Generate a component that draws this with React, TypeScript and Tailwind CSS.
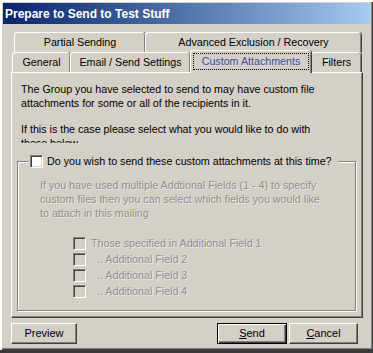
import React from "react";

const face = { fontFamily: '"Liberation Sans", Arial, sans-serif' };

function Tab({
  label,
  width,
  active,
}: {
  label: string;
  width: string;
  active?: boolean;
}): JSX.Element {
  if (active) {
    return (
      <div
        className={`${width} relative z-10 -mb-px flex h-[23px] items-start justify-center rounded-t-[3px] border-l border-t border-white bg-[#d4d0c8] px-[2px] pt-[2px] shadow-[inset_-1px_0_0_#808080,1px_0_0_#404040]`}
      >
        <div className="flex h-[17px] w-full items-center justify-center border border-dotted border-black text-[#3f4fa3]">
          {label}
        </div>
      </div>
    );
  }
  return (
    <div
      className={`${width} flex h-[20px] items-center justify-center rounded-t-[3px] border-l border-t border-white bg-[#d4d0c8] shadow-[inset_-1px_0_0_#808080,1px_0_0_#404040]`}
    >
      {label}
    </div>
  );
}

function Check({ disabled }: { disabled?: boolean }): JSX.Element {
  return (
    <div
      className={`h-[13px] w-[13px] shrink-0 border border-b-white border-l-[#808080] border-r-white border-t-[#808080] shadow-[inset_1px_1px_0_#404040,inset_-1px_-1px_0_#d4d0c8] ${
        disabled ? "bg-[#d4d0c8]" : "bg-white"
      }`}
    />
  );
}

function Button({
  children,
  width,
  primary,
}: {
  children: React.ReactNode;
  width: string;
  primary?: boolean;
}): JSX.Element {
  return (
    <button
      type="button"
      className={`${width} flex h-[21px] items-center justify-center bg-[#d4d0c8] text-[11px] text-black ${
        primary
          ? "border border-black shadow-[inset_1px_1px_0_#fff,inset_-1px_-1px_0_#404040,inset_-2px_-2px_0_#808080]"
          : "border border-b-[#404040] border-l-white border-r-[#404040] border-t-white shadow-[inset_-1px_-1px_0_#808080]"
      }`}
    >
      {children}
    </button>
  );
}

const fields = [
  { label: "Those specified in Additional Field 1", indent: "ml-[5px]" },
  { label: ".. Additional Field 2", indent: "ml-[11px]" },
  { label: ".. Additional Field 3", indent: "ml-[11px]" },
  { label: ".. Additional Field 4", indent: "ml-[11px]" },
];

function App(): JSX.Element {
  return (
    <div
      style={face}
      className="flex h-[353px] w-[373px] flex-col overflow-hidden border-b-[3px] border-b-[#3a3a3a] bg-[#d4d0c8] pb-[1px] pl-[3px] pr-[3px] pt-[3px] text-[10.7px] text-black shadow-[inset_2px_2px_0_#fff,inset_-1px_-1px_0_#404040,inset_-2px_-2px_0_#808080]"
    >
      {/* title bar */}
      <div className="flex h-[21px] shrink-0 items-center bg-gradient-to-r from-[#0a246a] to-[#a6caf0] pl-[2px] text-[12px] font-bold text-white">
        Prepare to Send to Test Stuff
      </div>

      <div className="ml-[8px] mt-[8px] w-[352px]">
        {/* tabs */}
        <div className="flex h-[20px] pl-[3px]">
          <Tab label="Partial Sending" width="w-[131px]" />
          <Tab label="Advanced Exclusion / Recovery" width="w-[216px]" />
        </div>
        <div className="flex h-[20px] items-end pl-[1px]">
          <Tab label="General" width="w-[58px]" />
          <Tab label="Email / Send Settings" width="w-[120px]" />
          <Tab label="Custom Attachments" width="w-[121px]" active />
          <Tab label="Filters" width="w-[50px]" />
        </div>

        {/* panel */}
        <div className="h-[246px] border border-b-[#404040] border-l-white border-r-[#404040] border-t-white px-[5px] pt-[9px] shadow-[inset_-1px_-1px_0_#808080]">
          <div className="h-[61px] overflow-hidden whitespace-nowrap pl-[4px] leading-[14px]">
            <p>
              The Group you have selected to send to may have custom file
              <br />
              attachments for some or all of the recipients in it.
            </p>
            <p className="mt-[12px]">
              If this is the case please select what you would like to do with
              <br />
              these below
            </p>
          </div>

          {/* group box */}
          <div className="relative mt-[18px] h-[150px] w-[339px] border border-[#808080] shadow-[inset_1px_1px_0_#fff,1px_1px_0_#fff]">
            <div className="absolute left-[10px] top-[-8px] flex h-[15px] items-center gap-[4px] bg-[#d4d0c8] pl-[2px] pr-[6px]">
              <Check />
              <span>Do you wish to send these custom attachments at this time?</span>
            </div>

            <div className="whitespace-nowrap pl-[22px] pt-[16px] leading-[14px] text-[#8f8f8f] [text-shadow:1px_1px_0_rgba(255,255,255,0.5)]">
              If you have used multiple Addtional Fields (1 - 4) to specify
              <br />
              custom files then you can select which fields you would like
              <br />
              to attach in this mailing
            </div>

            <div className="mt-[15px] pl-[55px] text-[#8f8f8f] [text-shadow:1px_1px_0_rgba(255,255,255,0.5)]">
              {fields.map(f => (
                <div key={f.label} className="flex h-[16px] items-center">
                  <Check disabled />
                  <span className={f.indent}>{f.label}</span>
                </div>
              ))}
            </div>
          </div>
        </div>

        {/* buttons */}
        <div className="mt-[5px] flex items-center">
          <Button width="w-[66px]">Preview</Button>
          <div className="ml-auto mr-[5px] flex gap-[2px]">
            <Button width="w-[70px]" primary>
              <span className="underline">S</span>end
            </Button>
            <Button width="w-[69px]">
              <span className="underline">C</span>ancel
            </Button>
          </div>
        </div>
      </div>
    </div>
  );
}

export default App;
